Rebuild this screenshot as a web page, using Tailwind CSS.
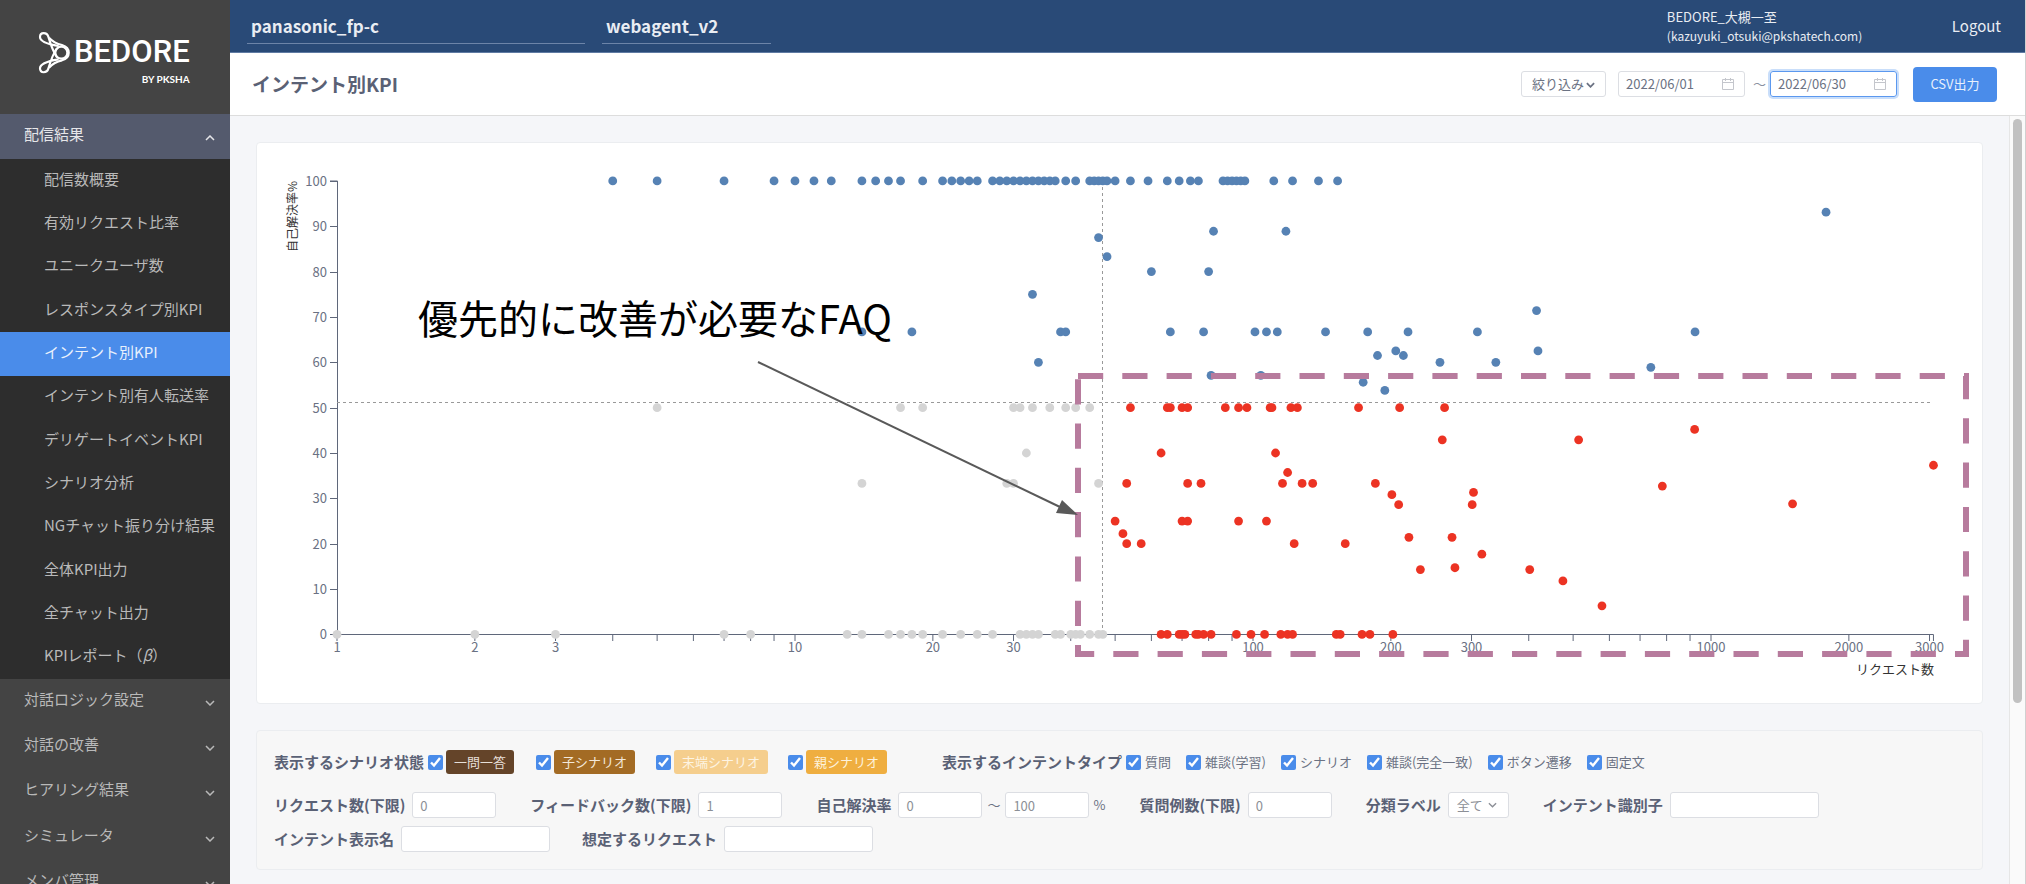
<!DOCTYPE html>
<html lang="ja">
<head>
<meta charset="utf-8">
<title>インテント別KPI</title>
<script src="https://cdn.jsdelivr.net/npm/@tailwindcss/browser@4"></script>
</head>
<body class="flex h-screen overflow-hidden border-r border-[#d0d0d0] bg-[#f5f6f9] font-['Noto_Sans_CJK_JP',sans-serif] text-[13px] leading-5 text-[#5a6275]">

<aside class="flex w-[230px] shrink-0 flex-col overflow-hidden bg-[#444444] text-[15px] text-[#b9b9b9]">
  <a href="#" class="flex h-[114px] shrink-0 items-start gap-[3px] pt-[31px] pl-[38px] text-white">
    <svg class="h-[43px] w-[33px] shrink-0" viewBox="114 92 99 129" fill="none" stroke="currentColor" stroke-width="6.5">
      <path d="M176 137C158 134 120 128 120 110C120 94 141 95 145 109C150 126 160 155 171 171"/>
      <path d="M176 177C158 180 120 186 120 204C120 220 141 219 145 205C150 188 160 159 171 143"/>
      <path d="M147 112C158 124 172 131 186 134C213 142 213 172 186 180C172 183 158 190 147 202"/>
      <circle cx="184" cy="157" r="18"/>
    </svg>
    <span class="flex flex-col items-end">
      <span class="font-['Roboto',sans-serif] text-[31px] leading-[42px] font-medium">BEDORE</span>
      <span class="font-['Lato',sans-serif] text-[10px] leading-3 font-bold">BY PKSHA</span>
    </span>
  </a>
  <button class="flex h-[45px] shrink-0 items-center justify-between bg-[#545a6d] pr-[15px] pb-[6px] pl-6 text-[#e6e6e9]">配信結果
    <svg class="mt-2 h-[6px] w-[10px]" viewBox="0 0 10 6" fill="none" stroke="currentColor" stroke-width="1.5"><path d="M1 5l4-4 4 4"/></svg></button>
  <nav class="grid h-[520px] shrink-0 auto-rows-fr bg-[#2d2d2d]">
    <a href="#" class="flex items-center pb-1 pl-11">配信数概要</a>
    <a href="#" class="flex items-center pb-1 pl-11">有効リクエスト比率</a>
    <a href="#" class="flex items-center pb-1 pl-11">ユニークユーザ数</a>
    <a href="#" class="flex items-center pb-1 pl-11">レスポンスタイプ別KPI</a>
    <a href="#" class="flex items-center bg-[#4a8cea] pb-1 pl-11 text-[#e8f0fc]">インテント別KPI</a>
    <a href="#" class="flex items-center pb-1 pl-11">インテント別有人転送率</a>
    <a href="#" class="flex items-center pb-1 pl-11">デリゲートイベントKPI</a>
    <a href="#" class="flex items-center pb-1 pl-11">シナリオ分析</a>
    <a href="#" class="flex items-center pb-1 pl-11">NGチャット振り分け結果</a>
    <a href="#" class="flex items-center pb-1 pl-11">全体KPI出力</a>
    <a href="#" class="flex items-center pb-1 pl-11">全チャット出力</a>
    <a href="#" class="flex items-center pb-1 pl-11">KPIレポート（<i>β</i>）</a>
  </nav>
  <div class="grid h-[227px] shrink-0 auto-rows-fr">
    <button class="flex items-center justify-between pr-[15px] pb-[6px] pl-6">対話ロジック設定
      <svg class="mt-2 h-[6px] w-[10px]" viewBox="0 0 10 6" fill="none" stroke="currentColor" stroke-width="1.5"><path d="M1 1l4 4 4-4"/></svg></button>
    <button class="flex items-center justify-between pr-[15px] pb-[6px] pl-6">対話の改善
      <svg class="mt-2 h-[6px] w-[10px]" viewBox="0 0 10 6" fill="none" stroke="currentColor" stroke-width="1.5"><path d="M1 1l4 4 4-4"/></svg></button>
    <button class="flex items-center justify-between pr-[15px] pb-[6px] pl-6">ヒアリング結果
      <svg class="mt-2 h-[6px] w-[10px]" viewBox="0 0 10 6" fill="none" stroke="currentColor" stroke-width="1.5"><path d="M1 1l4 4 4-4"/></svg></button>
    <button class="flex items-center justify-between pr-[15px] pb-[6px] pl-6">シミュレータ
      <svg class="mt-2 h-[6px] w-[10px]" viewBox="0 0 10 6" fill="none" stroke="currentColor" stroke-width="1.5"><path d="M1 1l4 4 4-4"/></svg></button>
    <button class="flex items-center justify-between pr-[15px] pb-[6px] pl-6">メンバ管理
      <svg class="mt-2 h-[6px] w-[10px]" viewBox="0 0 10 6" fill="none" stroke="currentColor" stroke-width="1.5"><path d="M1 1l4 4 4-4"/></svg></button>
  </div>
</aside>

<div class="flex min-w-0 flex-1 flex-col">
  <header class="flex h-[53px] shrink-0 items-center border-b border-[#5f7ba3] bg-[#294a77] pr-6 pl-[17px] text-[#e9edf3]">
    <select aria-label="企業" class="h-[36px] w-[338px] appearance-none border-b border-[#6c84a8] pl-1 text-[17px] leading-6 font-bold"><option>panasonic_fp-c</option></select>
    <select aria-label="エージェント" class="ml-[17px] h-[36px] w-[169px] appearance-none border-b border-[#6c84a8] pl-1 text-[17px] leading-6 font-bold"><option>webagent_v2</option></select>
    <p class="ml-auto w-[285px] text-[13px] leading-[19px]">BEDORE_大槻一至<br><span class="text-[12px]">(kazuyuki_otsuki@pkshatech.com)</span></p>
    <a href="#" class="text-[15px]">Logout</a>
  </header>

  <div class="flex h-[63px] shrink-0 items-center border-b border-[#dddddd] bg-white pr-7 pl-[22px]">
    <h1 class="text-[19px] leading-6 font-bold text-[#5a6175]">インテント別KPI</h1>
    <button class="ml-auto flex h-[26px] items-center gap-[2px] rounded-[3px] border border-[#dcdee3] px-[10px] text-[#6b7283]">絞り込み
      <svg class="mt-[2px] h-[6px] w-[9px]" viewBox="0 0 10 6" fill="none" stroke="currentColor" stroke-width="2"><path d="M1 1l4 4 4-4"/></svg></button>
    <label class="ml-3 flex h-[26px] w-[127px] items-center rounded-[3px] border border-[#dcdee3] pr-[10px] pl-[7px]">
      <input type="text" aria-label="開始日" value="2022/06/01" class="w-0 flex-1 text-[#6b7283] outline-none">
      <svg class="h-[12px] w-[12px] text-[#c4c6cc]" viewBox="0 0 12 12" fill="none" stroke="currentColor"><path d="M.5 1.5h11v10H.5zM.5 4.5h11M3.5 0v3M8.5 0v3"/></svg>
    </label>
    <span class="w-[25px] pl-2 text-[#8a90a0]">〜</span>
    <label class="flex h-[26px] w-[127px] items-center rounded-[3px] border border-[#5b98ef] pr-[10px] pl-[7px] ring-2 ring-[#c9defa]">
      <input type="text" aria-label="終了日" value="2022/06/30" class="w-0 flex-1 text-[#6b7283] outline-none">
      <svg class="h-[12px] w-[12px] text-[#c4c6cc]" viewBox="0 0 12 12" fill="none" stroke="currentColor"><path d="M.5 1.5h11v10H.5zM.5 4.5h11M3.5 0v3M8.5 0v3"/></svg>
    </label>
    <button class="ml-4 h-[35px] w-[84px] rounded-[4px] bg-[#4a8cea] text-[#e8f0fc]">CSV出力</button>
  </div>

  <div class="flex min-h-0 flex-1">
    <main class="flex min-w-0 flex-1 flex-col gap-[26px] overflow-hidden px-[26px] pt-[26px]">
      <section class="shrink-0 rounded-[4px] border border-[#ebedf0] bg-white">
        <svg id="chart" class="block w-full text-[13px]" viewBox="0 0 1725 560" role="img" aria-label="自己解決率とリクエスト数の散布図">
          <g id="axis" stroke="#5f677a" fill="none" stroke-width="1"></g>
          <g id="labels" fill="#6a7183"></g>
          <text x="1677" y="531" text-anchor="end" fill="#333">リクエスト数</text>
          <text transform="translate(40 38) rotate(-90)" text-anchor="end" class="text-[12px]" fill="#333">自己解決率%</text>
          <g stroke="#999" stroke-dasharray="3 3"><path d="M80 259.5H1674M845.5 38V491"/></g>
          <g id="dots"></g>
          <path d="M821 233H1709V511H821Z" fill="none" stroke="#b77b9d" stroke-width="6" stroke-dasharray="25.2 19.1"/>
          <path d="M501 219L803 364" stroke="#595959" stroke-width="2"/>
          <path d="M821 372L805 357L799 370Z" fill="#595959"/>
          <text x="161" y="191" class="text-[40px]" fill="#000">優先的に改善が必要なFAQ</text>
        </svg>
      </section>

      <form class="flex shrink-0 flex-col rounded-[4px] border border-[#ebedf0] bg-[#f7f7f7] px-[17px] pt-[18px] pb-[17px] text-[#6b7283]">
        <div class="flex h-[26px] items-center">
          <span class="w-[154px] text-[15px] font-bold text-[#5a6175]">表示するシナリオ状態</span>
          <label class="mr-[22px] flex items-center gap-[3px]"><input type="checkbox" checked class="size-[15px] accent-[#4a8cea]"><span class="h-6 rounded-[3px] bg-[#644429] px-2 leading-[23px] text-[#e6dfd8]">一問一答</span></label>
          <label class="mr-[21px] flex items-center gap-[3px]"><input type="checkbox" checked class="size-[15px] accent-[#4a8cea]"><span class="h-6 rounded-[3px] bg-[#a36b24] px-2 leading-[23px] text-[#f3e8da]">子シナリオ</span></label>
          <label class="mr-[20px] flex items-center gap-[3px]"><input type="checkbox" checked class="size-[15px] accent-[#4a8cea]"><span class="h-6 rounded-[3px] bg-[#f5ce8d] px-2 leading-[23px] text-[#fdf4e3]">末端シナリオ</span></label>
          <label class="mr-[55px] flex items-center gap-[3px]"><input type="checkbox" checked class="size-[15px] accent-[#4a8cea]"><span class="h-6 rounded-[3px] bg-[#efae40] px-2 leading-[23px] text-[#fdf2dd]">親シナリオ</span></label>
          <span class="w-[184px] text-[15px] font-bold text-[#5a6175]">表示するインテントタイプ</span>
          <span class="flex items-center gap-[15px]">
            <label class="flex items-center gap-1"><input type="checkbox" checked class="size-[15px] accent-[#4a8cea]">質問</label>
            <label class="flex items-center gap-1"><input type="checkbox" checked class="size-[15px] accent-[#4a8cea]">雑談(学習)</label>
            <label class="flex items-center gap-1"><input type="checkbox" checked class="size-[15px] accent-[#4a8cea]">シナリオ</label>
            <label class="flex items-center gap-1"><input type="checkbox" checked class="size-[15px] accent-[#4a8cea]">雑談(完全一致)</label>
            <label class="flex items-center gap-1"><input type="checkbox" checked class="size-[15px] accent-[#4a8cea]">ボタン遷移</label>
            <label class="flex items-center gap-1"><input type="checkbox" checked class="size-[15px] accent-[#4a8cea]">固定文</label>
          </span>
        </div>
        <div class="mt-[17px] flex items-center gap-x-[34px]">
          <label class="flex items-center gap-[7px] text-[15px] font-bold text-[#5a6175]">リクエスト数(下限)<input type="text" value="0" class="h-[26px] w-[84px] rounded-[3px] border border-[#dcdee3] bg-white px-[7px] text-[13px] font-normal text-[#8c8f96]"></label>
          <label class="flex items-center gap-[7px] text-[15px] font-bold text-[#5a6175]">フィードバック数(下限)<input type="text" value="1" class="h-[26px] w-[84px] rounded-[3px] border border-[#dcdee3] bg-white px-[7px] text-[13px] font-normal text-[#8c8f96]"></label>
          <span class="flex items-center">
            <label class="flex items-center gap-[7px] text-[15px] font-bold text-[#5a6175]">自己解決率<input type="text" value="0" class="h-[26px] w-[84px] rounded-[3px] border border-[#dcdee3] bg-white px-[7px] text-[13px] font-normal text-[#8c8f96]"></label>
            <span class="w-[23px] text-center">〜</span>
            <input type="text" value="100" aria-label="自己解決率の上限" class="h-[26px] w-[84px] rounded-[3px] border border-[#dcdee3] bg-white px-[7px] text-[#8c8f96]">
            <span class="ml-1">%</span>
          </span>
          <label class="flex items-center gap-[7px] text-[15px] font-bold text-[#5a6175]">質問例数(下限)<input type="text" value="0" class="h-[26px] w-[84px] rounded-[3px] border border-[#dcdee3] bg-white px-[7px] text-[13px] font-normal text-[#8c8f96]"></label>
          <label class="flex items-center gap-[7px] text-[15px] font-bold text-[#5a6175]">分類ラベル
            <span class="grid items-center">
              <select class="col-start-1 row-start-1 h-[26px] w-[61px] appearance-none rounded-[3px] border border-[#dcdee3] bg-white pl-2 text-[13px] font-normal text-[#8c8f96]"><option>全て</option></select>
              <svg class="pointer-events-none col-start-1 row-start-1 mr-3 h-[6px] w-[9px] justify-self-end text-[#8c8f96]" viewBox="0 0 10 6" fill="none" stroke="currentColor" stroke-width="1.5"><path d="M1 1l4 4 4-4"/></svg>
            </span></label>
          <label class="flex items-center gap-[7px] text-[15px] font-bold text-[#5a6175]">インテント識別子<input type="text" class="h-[26px] w-[149px] rounded-[3px] border border-[#dcdee3] bg-white px-[7px] text-[13px]"></label>
        </div>
        <div class="mt-2 flex items-center gap-x-8">
          <label class="flex items-center gap-[7px] text-[15px] font-bold text-[#5a6175]">インテント表示名<input type="text" class="h-[26px] w-[149px] rounded-[3px] border border-[#dcdee3] bg-white px-[7px] text-[13px]"></label>
          <label class="flex items-center gap-[7px] text-[15px] font-bold text-[#5a6175]">想定するリクエスト<input type="text" class="h-[26px] w-[149px] rounded-[3px] border border-[#dcdee3] bg-white px-[7px] text-[13px]"></label>
        </div>
      </form>
    </main>
    <div class="w-4 shrink-0 border-l border-[#e6e6e6] bg-[#fafafa] px-[3px] pt-[3px]">
      <div class="h-[584px] rounded-full bg-[#c1c1c1]"></div>
    </div>
  </div>
</div>

<script>
const X = n => 80 + 458 * Math.log10(n);
const Y = p => 491.4 - 4.535 * p;
const MAX = 3060;

// Axes and tick marks
let axis = `<path d="M73 38H80.5V491.5M80 491.5H${X(MAX)}V498"/>`;
let labels = '';
for (let p = 0; p <= 100; p += 10) {
  axis += `<path d="M73 ${Math.round(Y(p))}.5H80"/>`;
  labels += `<text x="70" y="${Y(p) + 5}" text-anchor="end">${p}</text>`;
}
for (let d = 1; d <= 1000; d *= 10)
  for (let k = 1; k < 10; k++) {
    if (d * k > MAX) break;
    axis += `<path d="M${X(d * k)} 491V498"/>`;
    if (k < 4) labels += `<text x="${X(d * k)}" y="509" text-anchor="middle">${d * k}</text>`;
  }
document.getElementById('axis').innerHTML = axis;
document.getElementById('labels').innerHTML = labels;

// Each series: [self-resolution rate, [request counts]]
const series = {
  '#d4d4d4': [
    [50, [5,17,19,30,31,33,36,39,41,44]], [40, [32]], [33.3, [14,29,30,46]],
    [0, [1,2,3,7,8,13,14,16,17,18,19,21,23,25,27,31,32,33,34,37,38,40,41,42,44,46,47]]
  ],
  '#5682b4': [
    [100, [4,5,7,9,10,11,12,14,15,16,17,19,21,22,23,24,25,27,28,29,30,31,32,33,34,35,36,37,39,41,44,45,46,47,48,50,54,59,65,69,73,76,86,88,90,92,94,96,111,122,139,153]],
    [93.1, [1783]], [88.9, [82,118]], [87.5, [46]], [83.3, [48]], [80, [60,80]], [75, [33]], [71.4, [416]],
    [66.7, [14,18,38,39,66,78,101,107,113,144,178,218,309,923]],
    [62.5, [205,419]], [61.5, [187,213]], [60, [34,256,339]], [58.9, [739]], [57.1, [81,104]], [55.6, [174]], [53.8, [194]]
  ],
  '#ec3323': [
    [50, [54,65,66,70,72,87,93,97,109,110,121,125,170,209,262]], [45.2, [921]], [42.9, [259,514]], [40, [63,112]],
    [37.3, [3060]], [35.7, [119]], [33.3, [53,72,77,116,128,135,185]], [32.7, [783]], [31.3, [303]], [30.8, [201]],
    [28.8, [1507]], [28.6, [208,301]], [25, [50,70,72,93,107]], [22.2, [52]], [21.4, [219,272]], [20, [53,57,123,159]],
    [17.7, [316]], [14.7, [276]], [14.3, [232,402]], [11.8, [475]], [6.3, [578]],
    [0, [63,65,69,70,71,75,76,78,81,92,99,106,115,119,122,152,155,173,180,202]]
  ]
};
document.getElementById('dots').innerHTML = Object.entries(series).map(([color, rows]) =>
  `<g fill="${color}">` + rows.map(([p, xs]) => xs.map(n => `<circle cx="${X(n)}" cy="${Y(p)}" r="4.4"/>`).join('')).join('') + '</g>').join('');
</script>
</body>
</html>
